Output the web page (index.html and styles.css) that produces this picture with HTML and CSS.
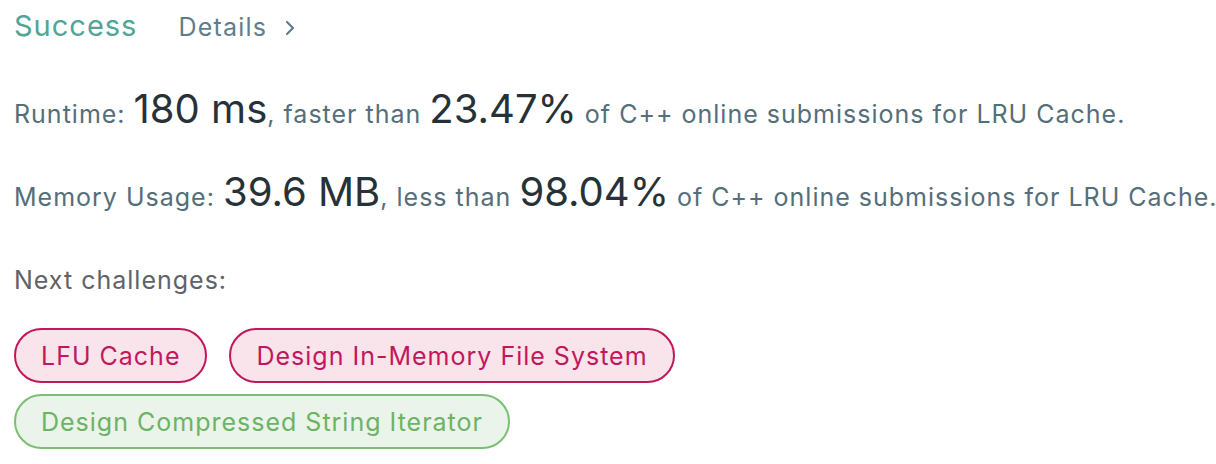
FILE: index.html
```html
<!DOCTYPE html>
<html>
<head>
<meta charset="utf-8">
<link rel="stylesheet" href="styles.css">
</head>
<body>
<div class="result">
  <div class="header">
    <span class="status">Success</span>
    <span class="details">Details<svg class="chev" width="10" height="16" viewBox="0 0 10 16"><path d="M2 2 L8 8 L2 14" fill="none" stroke="#607d8b" stroke-width="2.2" stroke-linecap="round" stroke-linejoin="round"/></svg></span>
  </div>
  <div class="stats">
    <div class="stat">Runtime: <span class="big">180 ms</span>, faster than <span class="big">23.47%</span> of C++ online submissions for LRU Cache.</div>
    <div class="stat">Memory Usage: <span class="big">39.6 MB</span>, less than <span class="big">98.04%</span> of C++ online submissions for LRU Cache.</div>
    <div class="next">Next challenges:</div>
  </div>
  <div class="chips">
    <span class="chip hard">LFU Cache</span>
    <span class="chip hard">Design In-Memory File System</span>
    <span class="chip easy">Design Compressed String Iterator</span>
  </div>
</div>
</body>
</html>
```
FILE: styles.css
```css
html, body {
  margin: 0;
  background: #ffffff;
  font-family: Inter, Roboto, sans-serif;
}
.result {
  padding: 0 14px;
}
.header {
  display: flex;
  align-items: baseline;
  height: 52px;
}
.status {
  font-size: 29px;
  letter-spacing: 1px;
  color: #4fa598;
  line-height: 52px;
}
.details {
  font-size: 25px;
  letter-spacing: 1.2px;
  color: #607d8b;
  margin-left: 41px;
}
.chev {
  margin-left: 18px;
}
.stats {
  padding-top: 21px;
}
.stat {
  font-size: 25px;
  letter-spacing: 1px;
  color: #546e7a;
  line-height: 83px;
  white-space: nowrap;
}
.big {
  font-size: 40px;
  letter-spacing: 0;
  line-height: 1;
  color: #263238;
}
.next {
  font-size: 25px;
  letter-spacing: 1px;
  color: #5f6368;
  line-height: 83px;
}
.chips {
  display: flex;
  flex-wrap: wrap;
  gap: 11px 22px;
  padding-top: 6px;
  max-width: 900px;
}
.chip {
  display: inline-flex;
  align-items: center;
  height: 55px;
  box-sizing: border-box;
  padding: 0 25px;
  border-radius: 28px;
  font-size: 25px;
  letter-spacing: 1px;
  border: 2px solid;
}
.hard {
  color: #c2185b;
  border-color: #c2185b;
  background: #f8e4ea;
}
.easy {
  color: #6cb363;
  border-color: #7bbf72;
  background: #eaf4ea;
}
```
